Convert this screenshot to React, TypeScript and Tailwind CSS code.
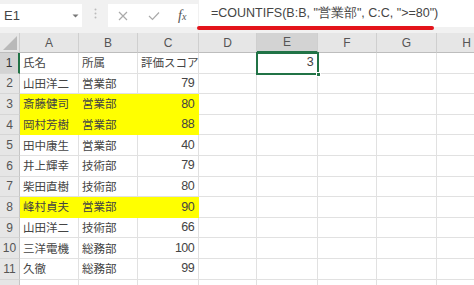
import React from "react";

const cols = ["A", "B", "C", "D", "E", "F", "G", "H"];
const colW = [59, 59, 61, 58, 61, 59, 60, 60];

const data: { name: string; dept: string; score: string; hl?: boolean }[] = [
  { name: "氏名", dept: "所属", score: "評価スコア" },
  { name: "山田洋二", dept: "営業部", score: "79" },
  { name: "斎藤健司", dept: "営業部", score: "80", hl: true },
  { name: "岡村芳樹", dept: "営業部", score: "88", hl: true },
  { name: "田中康生", dept: "営業部", score: "40" },
  { name: "井上輝幸", dept: "技術部", score: "79" },
  { name: "柴田直樹", dept: "技術部", score: "80" },
  { name: "峰村貞夫", dept: "営業部", score: "90", hl: true },
  { name: "山田洋二", dept: "技術部", score: "66" },
  { name: "三洋電機", dept: "総務部", score: "100" },
  { name: "久徹", dept: "総務部", score: "99" },
  { name: "", dept: "", score: "" },
];

const font = { fontFamily: '"Noto Sans CJK JP", "Liberation Sans", sans-serif' };

export default function App() {
  return (
    <div className="relative w-[474px] h-[285px] overflow-hidden bg-white text-[#444]" style={font}>
      {/* formula bar */}
      <div className="h-[33px] bg-[#f1f1f1] flex items-start relative">
        <div className="mt-[4px] w-[82px] h-[23px] bg-white flex items-center justify-between pl-[4px] pr-[3px]">
          <span className="text-[13px] text-[#444] font-['Liberation_Sans']">E1</span>
          <svg width="7" height="4" viewBox="0 0 7 4"><path d="M0.5 0.5 L3.5 3.5 L6.5 0.5Z" fill="#777" /></svg>
        </div>
        <div className="w-[26px] h-[27px] flex items-center justify-center">
          <svg width="3" height="11" viewBox="0 0 3 11">
            <circle cx="1.5" cy="1.5" r="1" fill="#bbb" />
            <circle cx="1.5" cy="5.5" r="1" fill="#bbb" />
            <circle cx="1.5" cy="9.5" r="1" fill="#bbb" />
          </svg>
        </div>
        <div className="mt-[4px] w-[90px] h-[23px] bg-white flex items-center">
          <svg className="ml-[10px]" width="10" height="10" viewBox="0 0 10 10">
            <path d="M1 1 L9 9 M9 1 L1 9" stroke="#aaa" strokeWidth="1.2" />
          </svg>
          <svg className="ml-[20px]" width="12" height="10" viewBox="0 0 12 10">
            <path d="M1 5 L4.5 8.5 L11 1.5" stroke="#aaa" strokeWidth="1.2" fill="none" />
          </svg>
          <span className="ml-[18px] text-[14px] italic text-[#555] font-['Liberation_Serif']">
            f<span className="text-[10px]">x</span>
          </span>
        </div>
        <div className="ml-[1px] flex-1 h-[27px] bg-white flex items-center pl-[12px]">
          <span className="text-[12.5px] text-[#444] font-['Liberation_Sans'] whitespace-nowrap">
            =COUNTIFS(B:B, "営業部", C:C, "&gt;=80")
          </span>
        </div>
        <div className="absolute left-[197px] top-[26px] w-[237px] h-[4px] rounded-full bg-[#e3141b]" />
      </div>

      {/* sheet */}
      <div className="flex">
        <div className="w-[20px] shrink-0">
          <div className="h-[20px] bg-[#e6e6e6] border-b border-[#bdbdbd] border-r border-r-[#cfcfcf] relative overflow-hidden">
            <svg className="absolute right-[2px] bottom-[2px]" width="14" height="14" viewBox="0 0 14 14">
              <path d="M14 0 L14 14 L0 14 Z" fill="#b9b9b9" />
            </svg>
          </div>
          {data.map((_, i) => (
            <div
              key={i}
              className={`h-[20.6px] flex items-center justify-center text-[12px] font-['Liberation_Sans'] border-b border-[#d6d6d6] ${
                i === 0 ? "bg-[#d3d3d3] border-r-2 border-r-[#217346] text-[#333]" : "bg-[#e6e6e6] border-r border-r-[#c6c6c6] text-[#555]"
              }`}
            >
              {i < 11 ? i + 1 : ""}
            </div>
          ))}
        </div>
        {cols.map((c, ci) => (
          <div key={c} className="shrink-0" style={{ width: colW[ci] }}>
            <div
              className={`h-[20px] flex items-center justify-center text-[12px] text-[#555] font-['Liberation_Sans'] border-r border-[#cfcfcf] ${
                c === "E" ? "bg-[#d3d3d3] border-b-2 border-b-[#217346]" : "bg-[#e6e6e6] border-b border-b-[#bdbdbd]"
              }`}
            >
              {c}
            </div>
            {data.map((r, ri) => {
              let text = "";
              let right = false;
              if (c === "A") text = r.name;
              if (c === "B") text = r.dept;
              if (c === "C") {
                text = r.score;
                right = ri > 0;
              }
              if (c === "E" && ri === 0) {
                text = "3";
                right = true;
              }
              const hl = r.hl && (c === "A" || c === "B" || c === "C");
              const num = /^\d+$/.test(text);
              return (
                <div
                  key={ri}
                  className={`h-[20.6px] flex items-center whitespace-nowrap overflow-visible border-b border-r ${
                    hl ? "bg-[#ffff00] border-[#ffff00]" : "bg-white border-[#e1e1e1]"
                  } ${right ? "justify-end pr-[4px]" : "pl-[3px]"}`}
                >
                  <span
                    className={
                      num
                        ? "font-['Liberation_Sans'] text-[12.5px] tracking-[-0.6px]"
                        : "text-[11.5px]"
                    }
                  >
                    {text}
                  </span>
                </div>
              );
            })}
          </div>
        ))}
      </div>
      <div className="absolute left-[256px] top-[52px] w-[63px] h-[23px] border-2 border-[#217346] pointer-events-none">
        <div className="absolute -right-[4px] -bottom-[4px] w-[5px] h-[5px] bg-[#217346] border border-white" />
      </div>
    </div>
  );
}
